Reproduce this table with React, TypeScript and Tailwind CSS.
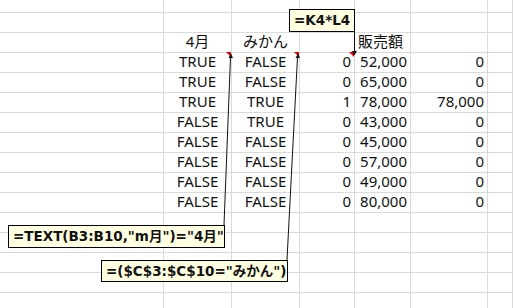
import React from 'react';

const cols = ['w-[164px]', 'w-[68px]', 'w-[68px]', 'w-[55px]', 'w-[56px]', 'w-[77px]', 'w-[25px]'];

const data: [string, string, string, string, string][] = [
  ['TRUE', 'FALSE', '0', '52,000', '0'],
  ['TRUE', 'FALSE', '0', '65,000', '0'],
  ['TRUE', 'TRUE', '1', '78,000', '78,000'],
  ['FALSE', 'TRUE', '0', '43,000', '0'],
  ['FALSE', 'FALSE', '0', '45,000', '0'],
  ['FALSE', 'FALSE', '0', '57,000', '0'],
  ['FALSE', 'FALSE', '0', '49,000', '0'],
  ['FALSE', 'FALSE', '0', '80,000', '0'],
];

type Cell = { text?: string; align?: 'center' | 'right' | 'left' };

function Row({ cells, h }: { cells: Cell[]; h: string }) {
  return (
    <div className={`flex ${h}`}>
      {cols.map((w, i) => {
        const c = cells[i] || {};
        const justify =
          c.align === 'center' ? 'justify-center' : c.align === 'right' ? 'justify-end pr-[3px]' : 'justify-start pl-[3px]';
        return (
          <div
            key={i}
            className={`${w} shrink-0 border-r border-b border-[#dadada] flex items-end pb-[2px] ${justify} text-[15px] leading-[17px] text-[#111] whitespace-nowrap`}
          >
            {c.text}
          </div>
        );
      })}
    </div>
  );
}

// comment popups (they sit over the sheet)
const note =
  "absolute bg-[#ffffe1] border border-black flex items-center pl-[4px] text-[13.5px] font-bold text-[#111] whitespace-nowrap font-['DejaVu_Sans','Noto_Sans_CJK_JP',sans-serif]";

export default function App() {
  const empty: Cell[] = [];
  return (
    <div className="relative w-[513px] h-[308px] overflow-hidden bg-white font-['Noto_Sans','Noto_Sans_CJK_JP',sans-serif]">
      <Row cells={empty} h="h-[13px]" />
      <Row cells={empty} h="h-[20px]" />
      <Row
        h="h-[20px]"
        cells={[{}, { text: '4月', align: 'center' }, { text: 'みかん', align: 'center' }, {}, { text: '販売額', align: 'left' }, {}, {}]}
      />
      {data.map((r, i) => (
        <Row
          key={i}
          h="h-[20px]"
          cells={[
            {},
            { text: r[0], align: 'center' },
            { text: r[1], align: 'center' },
            { text: r[2], align: 'right' },
            { text: r[3], align: 'right' },
            { text: r[4], align: 'right' },
            {},
          ]}
        />
      ))}
      <Row cells={empty} h="h-[20px]" />
      <Row cells={empty} h="h-[20px]" />
      <Row cells={empty} h="h-[20px]" />
      <Row cells={empty} h="h-[20px]" />
      <Row cells={empty} h="h-[20px]" />

      {/* comment markers and leader lines */}
      <svg className="absolute left-0 top-0" width="513" height="308">
        <polygon points="226,52 231,52 231,57" fill="#e00000" />
        <polygon points="294,52 299,52 299,57" fill="#e00000" />
        <polygon points="349,52 354,52 354,57" fill="#e00000" />
        <line x1="230.5" y1="57" x2="224" y2="225" stroke="#111" strokeWidth="1" />
        <line x1="297.5" y1="57" x2="287" y2="260" stroke="#111" strokeWidth="1" />
        <line x1="354.5" y1="32" x2="354.5" y2="52" stroke="#111" strokeWidth="1" />
        <polygon points="228.5,58 231,53.5 233,58" fill="#111" />
        <polygon points="295.5,58 298,53.5 300,58" fill="#111" />
        <polygon points="352,51 354.5,55.5 357,51" fill="#111" />
      </svg>

      <div className={`${note} left-[289px] top-[9px] w-[66px] h-[23px]`}>=K4*L4</div>
      <div className={`${note} left-[8px] top-[225px] w-[217px] h-[23px]`}>=TEXT(B3:B10,"m月")="4月"</div>
      <div className={`${note} left-[101px] top-[260px] w-[187px] h-[22px]`}>=($C$3:$C$10="みかん")</div>
    </div>
  );
}
